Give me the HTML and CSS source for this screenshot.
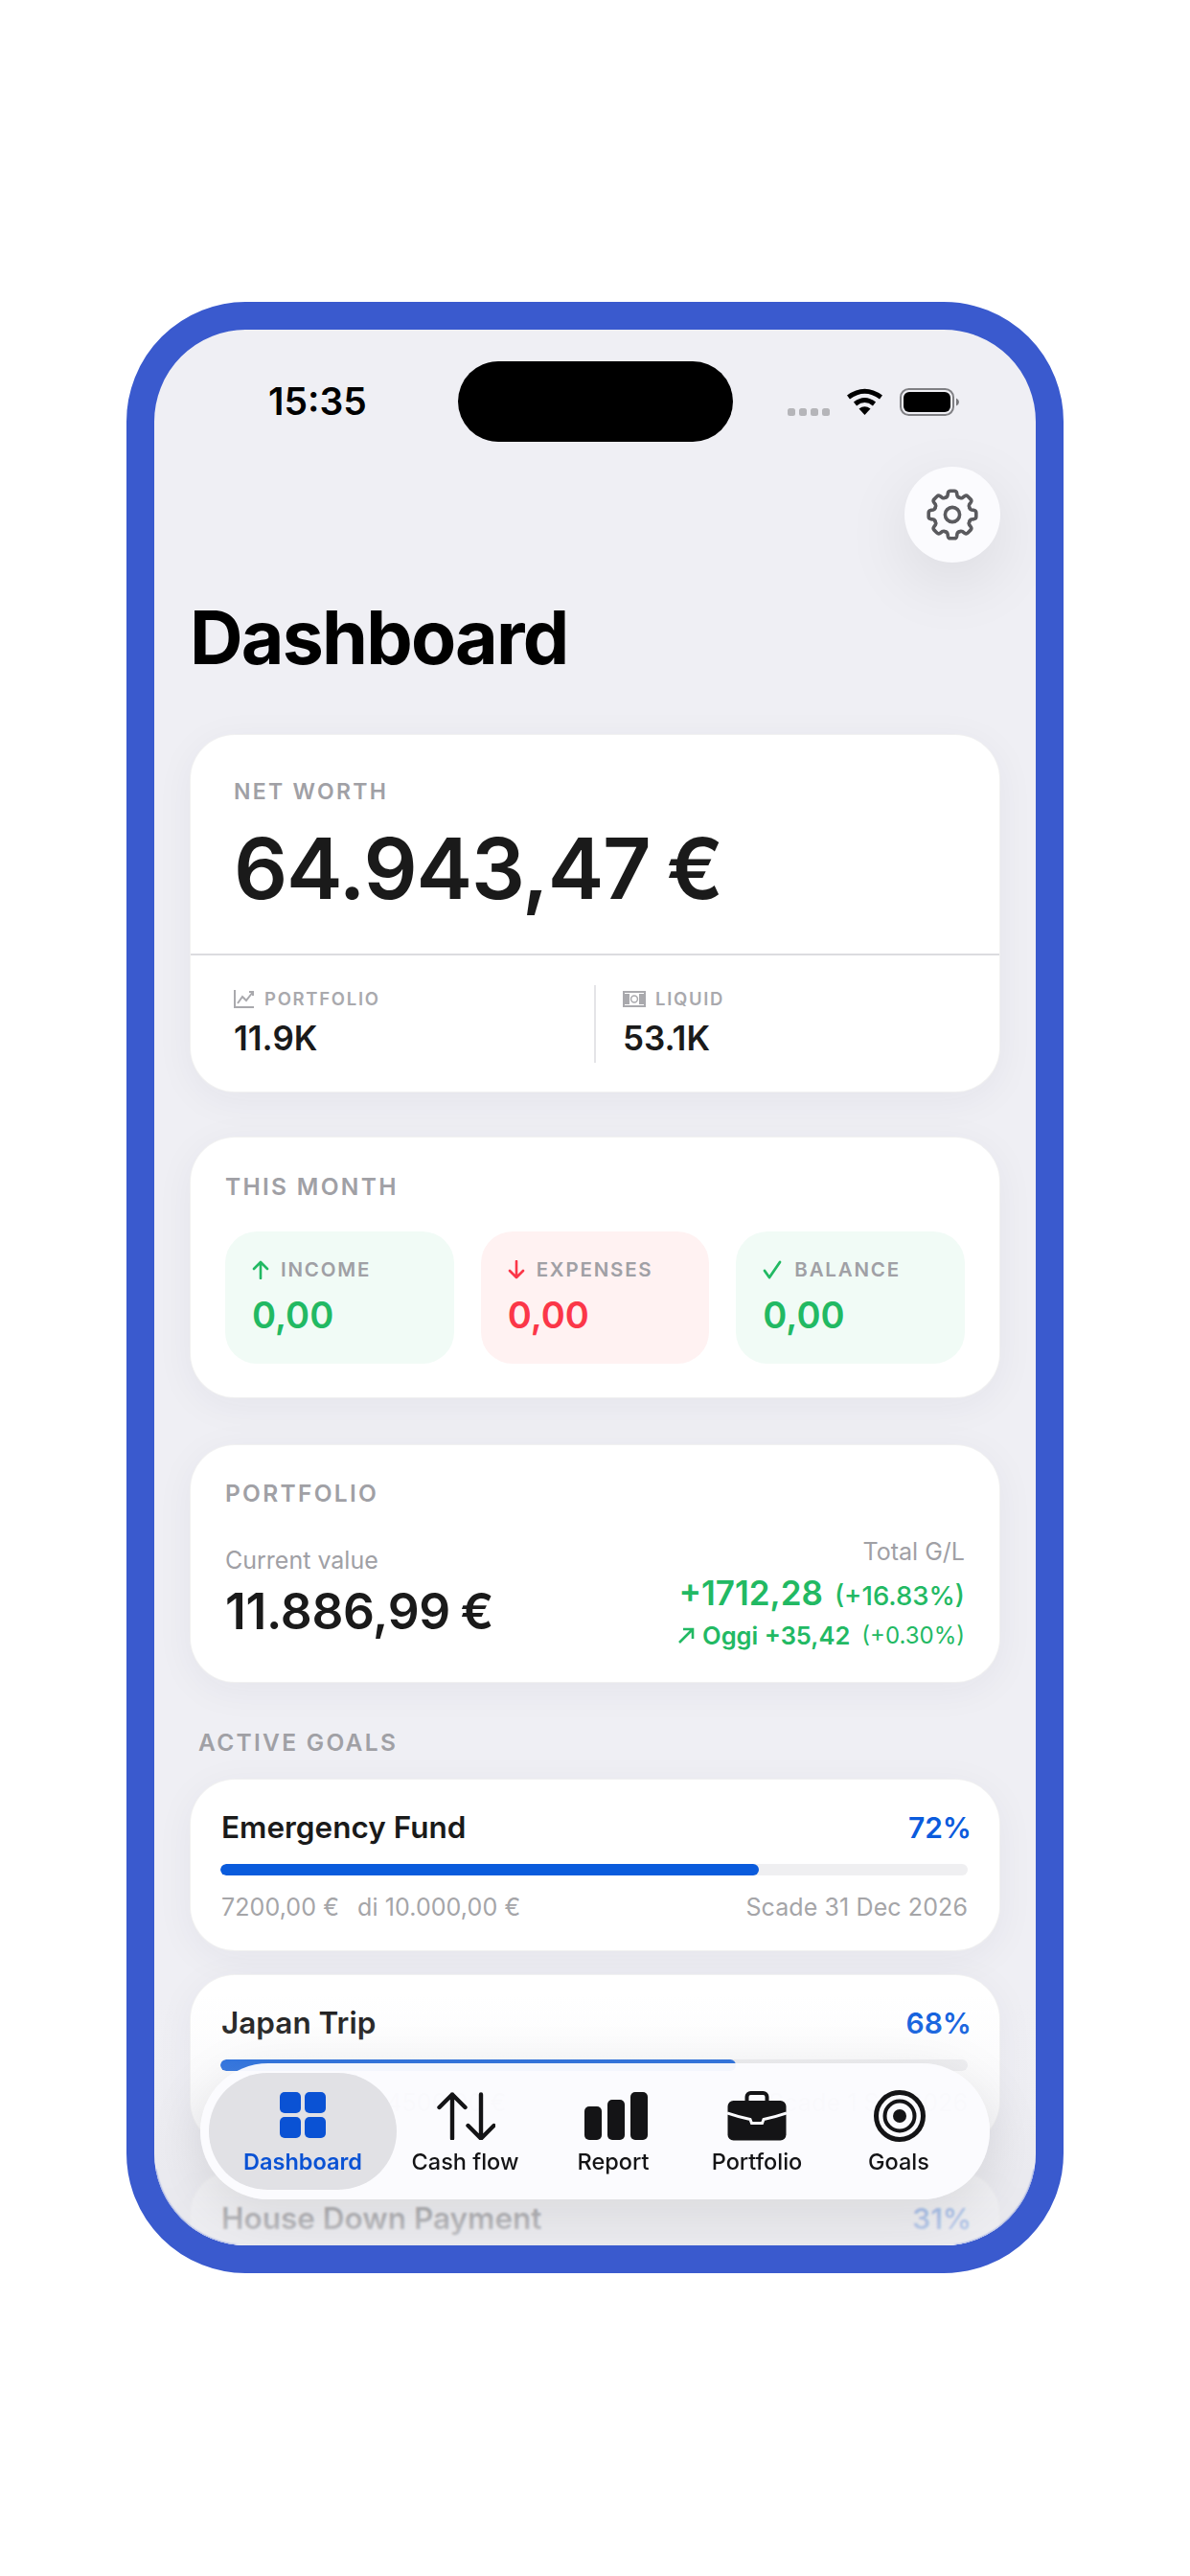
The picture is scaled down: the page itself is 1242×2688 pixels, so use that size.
FILE: index.html
```html
<!DOCTYPE html>
<html lang="en">
<head>
<meta charset="utf-8">
<title>Dashboard</title>
<link rel="stylesheet" href="styles.css">
</head>
<body>
<div class="phone">
  <main class="screen">
    <header class="status">
      <span class="time">15:35</span>
      <span class="island"></span>
      <div class="status-icons">
        <span class="dots"><i></i><i></i><i></i><i></i></span>
        <svg class="wifi" viewBox="0 0 39 28"><path d="M2.5 9.5Q19.5 -3 36.5 9.5" fill="none" stroke="#000" stroke-width="5"/><path d="M9.5 16.5Q19.5 8.5 29.5 16.5" fill="none" stroke="#000" stroke-width="5"/><path d="M13.5 21.5Q19.5 17 25.5 21.5L19.5 28Z"/></svg>
        <svg class="battery" viewBox="0 0 62 29"><rect x="1" y="1" width="55" height="27" rx="8.5" fill="none" stroke="#808084" stroke-width="2"/><rect x="4" y="4" width="49" height="21" rx="6"/><path d="M59 10.5Q62 12 62 14.5T59 18.5Z" fill="#77777b"/></svg>
      </div>
    </header>
    <div class="top-row">
      <button class="gear-btn" aria-label="Settings">
        <svg class="gear" viewBox="-28 -28 56 56">
          <defs><path id="tooth" d="M-7.4-17.8Q-5.6-18-5-20L-4.6-22.6Q-4.2-24.8-2-24.8H2Q4.2-24.8 4.6-22.6L5-20Q5.6-18 7.4-17.8"/></defs>
          <g class="gear-lines">
            <use href="#tooth"/><use href="#tooth" transform="rotate(45)"/><use href="#tooth" transform="rotate(90)"/><use href="#tooth" transform="rotate(135)"/><use href="#tooth" transform="rotate(180)"/><use href="#tooth" transform="rotate(225)"/><use href="#tooth" transform="rotate(270)"/><use href="#tooth" transform="rotate(315)"/>
            <circle r="7.6"/>
          </g>
        </svg>
      </button>
    </div>
    <h1 class="title">Dashboard</h1>

    <section class="card worth">
      <div class="worth-top">
        <div class="label">NET WORTH</div>
        <div class="worth-value">64.943,47 €</div>
      </div>
      <div class="worth-split">
        <div class="split-col">
          <div class="mini-label"><svg class="mini-icon" viewBox="0 0 22 20"><path d="M1 1V19H21M4 15L9 8L13 12L20 3M16 3H20V7" fill="none" stroke="#a9a9ad" stroke-width="2"/></svg>PORTFOLIO</div>
          <div class="split-value">11.9K</div>
        </div>
        <div class="split-col split-right">
          <div class="mini-label"><svg class="mini-icon wide" viewBox="0 0 24 17"><rect x="1" y="1" width="22" height="15" fill="none" stroke="#a9a9ad" stroke-width="2"/><rect x="1" y="3" width="6" height="11" fill="#a9a9ad"/><rect x="17" y="3" width="6" height="11" fill="#a9a9ad"/><circle cx="12" cy="8.5" r="3.4" fill="none" stroke="#a9a9ad" stroke-width="1.5"/></svg>LIQUID</div>
          <div class="split-value">53.1K</div>
        </div>
      </div>
    </section>

    <section class="card month">
      <div class="label">THIS MONTH</div>
      <div class="tiles">
        <div class="tile tile-green">
          <div class="tile-label"><svg class="tile-icon" viewBox="0 0 18 20"><path d="M9 19V2M2 9L9 2L16 9" fill="none" stroke="#22b963" stroke-width="2.6" stroke-linecap="round" stroke-linejoin="round"/></svg>INCOME</div>
          <div class="tile-value green">0,00</div>
        </div>
        <div class="tile tile-red">
          <div class="tile-label"><svg class="tile-icon" viewBox="0 0 18 20"><path d="M9 1V18M2 11L9 18L16 11" fill="none" stroke="#fb3748" stroke-width="2.6" stroke-linecap="round" stroke-linejoin="round"/></svg>EXPENSES</div>
          <div class="tile-value red">0,00</div>
        </div>
        <div class="tile tile-green">
          <div class="tile-label"><svg class="tile-icon check" viewBox="0 0 20 20"><path d="M2 11L7 18L18 2" fill="none" stroke="#22b963" stroke-width="2.8" stroke-linecap="round" stroke-linejoin="round"/></svg>BALANCE</div>
          <div class="tile-value green">0,00</div>
        </div>
      </div>
    </section>

    <section class="card portfolio">
      <div class="label">PORTFOLIO</div>
      <div class="pf-row">
        <div class="pf-left">
          <div class="pf-caption">Current value</div>
          <div class="pf-value">11.886,99 €</div>
        </div>
        <div class="pf-right">
          <div class="pf-caption">Total G/L</div>
          <div class="pf-gain"><b>+1712,28</b><span>(+16.83%)</span></div>
          <div class="pf-today"><svg class="today-icon" viewBox="0 0 18 18"><path d="M2 16L16 2M6 2H16V12" fill="none" stroke="#22b963" stroke-width="2.6"/></svg><b>Oggi +35,42</b><span>(+0.30%)</span></div>
        </div>
      </div>
    </section>

    <div class="label goals-label">ACTIVE GOALS</div>

    <section class="card goal">
      <div class="goal-head"><span>Emergency Fund</span><b>72%</b></div>
      <div class="track"><div class="fill" style="width:72%"></div></div>
      <div class="goal-sub"><span>7200,00 €<em>di 10.000,00 €</em></span><span>Scade 31 Dec 2026</span></div>
    </section>
    <section class="card goal">
      <div class="goal-head"><span>Japan Trip</span><b>68%</b></div>
      <div class="track"><div class="fill" style="width:69%"></div></div>
      <div class="goal-sub"><span>3060,00 €<em>di 4500,00 €</em></span><span>Scade 1 Set 2026</span></div>
    </section>
    <section class="card goal">
      <div class="goal-head"><span>House Down Payment</span><b>31%</b></div>
      <div class="track"><div class="fill" style="width:31%"></div></div>
    </section>
  </main>

  <div class="fade"></div>

  <nav class="tabbar">
    <a class="tab tab-active">
      <svg class="tab-icon" viewBox="0 0 48 50" fill="#0a52d4"><rect x="0" y="0" width="22" height="22" rx="5"/><rect x="26" y="0" width="22" height="22" rx="5"/><rect x="0" y="26" width="22" height="22" rx="5"/><rect x="26" y="26" width="22" height="22" rx="5"/></svg>
      <span>Dashboard</span>
    </a>
    <a class="tab">
      <svg class="tab-icon" viewBox="0 0 62 50"><path d="M17 48.500V2.500M3.500 16L17 2.500L30.500 16M47 2.500V48.500M33.500 35L47 48.500L60.500 35" fill="none" stroke="#141416" stroke-width="4.400" stroke-linecap="round" stroke-linejoin="round"/></svg>
      <span>Cash flow</span>
    </a>
    <a class="tab">
      <svg class="tab-icon report-icon" viewBox="0 0 66 50" fill="#141416"><rect x="0" y="15" width="18" height="35" rx="5"/><rect x="24" y="8" width="18" height="42" rx="5"/><rect x="48" y="0" width="18" height="50" rx="5"/></svg>
      <span>Report</span>
    </a>
    <a class="tab">
      <svg class="tab-icon case-icon" viewBox="0 0 62 52"><rect x="20.500" y="2" width="21" height="14" rx="4" fill="none" stroke="#141416" stroke-width="4"/><rect x="0.500" y="10" width="61" height="41.500" rx="6" fill="#141416"/><path d="M0 23Q13 27.500 24 29.500L25.500 33.500H36.500L38 29.500Q49 27.500 62 23" fill="none" stroke="#fbfbfe" stroke-width="3"/></svg>
      <span>Portfolio</span>
    </a>
    <a class="tab">
      <svg class="tab-icon target-icon" viewBox="0 0 54 54"><circle cx="27" cy="27" r="24.500" fill="none" stroke="#141416" stroke-width="5"/><circle cx="27" cy="27" r="15.500" fill="none" stroke="#141416" stroke-width="4"/><circle cx="27" cy="27" r="7" fill="#141416"/></svg>
      <span>Goals</span>
    </a>
  </nav>
</div>
</body>
</html>
```

FILE: styles.css
```css
* { box-sizing: border-box; }
html, body { margin: 0; padding: 0; background: #fff; }
body { height: 2688px; overflow: hidden; font-family: Inter, "Liberation Sans", sans-serif; color: #1a1a1a; }

.phone {
  position: relative;
  width: 978px;
  height: 2057px;
  margin: 315px auto 0;
  border: 29px solid #3a5ace;
  border-radius: 125px;
  overflow: hidden;
  background: #efeff4;
}
.screen { height: 100%; padding: 33px 37px 0; overflow: hidden; }

.status { display: grid; grid-template-columns: 1fr 287px 1fr; margin: 0 -37px; height: 84px; }
.time { font-size: 39px; line-height: 84px; font-weight: 600; color: #000; padding-left: 119px; }
.island { background: #000; border-radius: 42px; }
.status-icons { display: flex; align-items: flex-start; padding: 28px 0 0 57px; }
.dots { display: flex; gap: 4px; margin-top: 21px; }
.dots i { width: 8px; height: 8px; border-radius: 2.500px; background: #b5b5b9; }
.wifi { width: 39px; height: 28px; margin-left: 17px; }
.battery { width: 62px; height: 29px; margin-left: 17px; }

.top-row { display: flex; justify-content: flex-end; margin-top: 26px; }
.gear-btn {
  width: 100px; height: 100px; padding: 0; border: 0; border-radius: 50%;
  background: #fbfbfe; box-shadow: 0 20px 70px rgba(0, 0, 0, .09);
  display: flex; align-items: center; justify-content: center;
}
.gear { width: 56px; height: 56px; }
.gear-lines { fill: none; stroke: #5a5a5e; stroke-width: 3.600; stroke-linecap: round; stroke-linejoin: round; }

.title { margin: 30px 0 0; font-size: 77px; line-height: 96px; font-weight: 700; color: #000; letter-spacing: -1.800px; height: 149px; }

.card {
  background: #fff; border: 1px solid rgba(0, 0, 0, .055); border-radius: 47px;
  box-shadow: 0 8px 40px rgba(40, 40, 70, .05);
}
.label { font-size: 24.500px; line-height: 24px; font-weight: 600; color: #a0a0a5; letter-spacing: 2.300px; }

.worth { height: 374px; }
.worth-top { padding: 47px 0 39px 45px; border-bottom: 2px solid #dcdcdf; }
.worth-top .label { font-size: 23px; }
.worth-value { margin-top: 18px; font-size: 88px; line-height: 100px; font-weight: 600; color: #1a1a1a; letter-spacing: -1.200px; word-spacing: -4px; }
.worth-split { display: flex; padding: 31px 0 0 45px; }
.split-col { width: 376px; height: 81px; padding-top: 4px; }
.split-right { flex: 1; border-left: 2px solid #e4e4e7; padding-left: 28px; }
.mini-label { display: flex; align-items: center; font-size: 18.500px; line-height: 20px; font-weight: 600; color: #a9a9ad; letter-spacing: 1.700px; }
.mini-icon { width: 22px; height: 20px; margin-right: 10px; }
.mini-icon.wide { width: 24px; height: 17px; margin-right: 10px; }
.split-value { margin-top: 13px; font-size: 35px; line-height: 36px; font-weight: 600; color: #1a1a1a; }

.month { margin-top: 46px; height: 273px; padding: 39px 36px 0; }
.tiles { display: grid; grid-template-columns: repeat(3, 1fr); gap: 28px; margin-top: 35px; }
.tile { height: 138px; border-radius: 33px; padding: 30px 0 0 28px; }
.tile-green { background: #f1fbf6; }
.tile-red { background: #fff2f2; }
.tile-label { display: flex; align-items: center; font-size: 20.500px; line-height: 20px; font-weight: 600; color: #a0a0a5; letter-spacing: 1.800px; }
.tile-icon { width: 18px; height: 20px; margin-right: 12px; }
.tile-icon.check { width: 20px; margin-right: 13px; }
.tile-value { margin-top: 14px; font-size: 38px; line-height: 46px; font-weight: 600; }
.green { color: #22b963; }
.red { color: #fb3748; }

.portfolio { margin-top: 48px; height: 249px; padding: 38px 36px 0; }
.pf-row { display: flex; justify-content: space-between; align-items: flex-start; margin-top: 34px; }
.pf-left { padding-top: 9px; }
.pf-caption { font-size: 25px; line-height: 30px; color: #a0a0a5; }
.pf-value { margin-top: 10px; font-size: 51.500px; line-height: 56px; font-weight: 600; color: #1a1a1a; letter-spacing: -.3px; word-spacing: -2px; }
.pf-right { display: flex; flex-direction: column; align-items: flex-end; }
.pf-gain { margin-top: 8px; line-height: 40px; color: #22b963; display: flex; align-items: baseline; gap: 12px; }
.pf-gain b { font-size: 35px; font-weight: 600; }
.pf-gain span { font-size: 27.500px; font-weight: 500; }
.pf-today { margin-top: 6px; line-height: 32px; color: #22b963; display: flex; align-items: center; }
.pf-today b { font-size: 25.500px; font-weight: 600; }
.pf-today span { font-size: 24px; font-weight: 400; margin-left: 12px; }
.today-icon { width: 18px; height: 18px; margin-right: 8px; }

.goals-label { margin-top: 50px; padding-left: 9px; }
.goal { margin-top: 24px; height: 180px; padding: 31px 33px 0; }
.goals-label + .goal { margin-top: 26px; }
.goal-head { display: flex; justify-content: space-between; margin: 0 -4px 0 -1px; font-size: 31.500px; line-height: 38px; font-weight: 600; color: #1a1a1a; }
.goal-head b { font-size: 30px; font-weight: 600; color: #0a5bdd; }
.track { margin: 19px 0 0 -2px; height: 12px; border-radius: 6px; background: #efeff1; overflow: hidden; }
.fill { height: 100%; border-radius: 6px; background: #0a5bdc; }
.goal-sub { display: flex; justify-content: space-between; margin: 18px 0 0 -1px; font-size: 25px; line-height: 30px; letter-spacing: .1px; color: #a5a5a8; }
.goal-sub em { font-style: normal; margin-left: 19px; }

.fade {
  position: absolute; left: 0; right: 0; bottom: 0; height: 290px;
  background: linear-gradient(to bottom, rgba(236, 236, 241, 0) 10%, rgba(236, 236, 241, .1) 24%, rgba(236, 236, 241, .2) 35%, rgba(232, 232, 237, .85) 100%);
}
.fade::after {
  content: ""; position: absolute; left: 0; right: 0; bottom: 0; height: 80px;
  backdrop-filter: blur(1px);
}

.tabbar {
  position: absolute; left: 48px; top: 1809px; width: 824px; height: 142px;
  padding: 10px 9px; border-radius: 71px;
  background: rgba(251, 251, 254, .965);
  box-shadow: 0 14px 60px rgba(0, 0, 0, .1);
  display: grid; grid-template-columns: 196px 143px 166px 134px 162px;
}
.tab { display: flex; flex-direction: column; align-items: center; height: 122px; padding-top: 20px; border-radius: 61px; font-size: 23.500px; line-height: 28px; font-weight: 500; color: #141416; }
.tab span { margin-top: 9px; }
.tab-icon { height: 50px; display: block; }
.report-icon { margin-left: 6px; }
.case-icon { height: 52px; margin: -1px 0; }
.target-icon { height: 54px; margin: -2px 0 -2px 1px; }
.tab-active { background: #e1e1e5; color: #0a52d4; font-weight: 600; }
```
